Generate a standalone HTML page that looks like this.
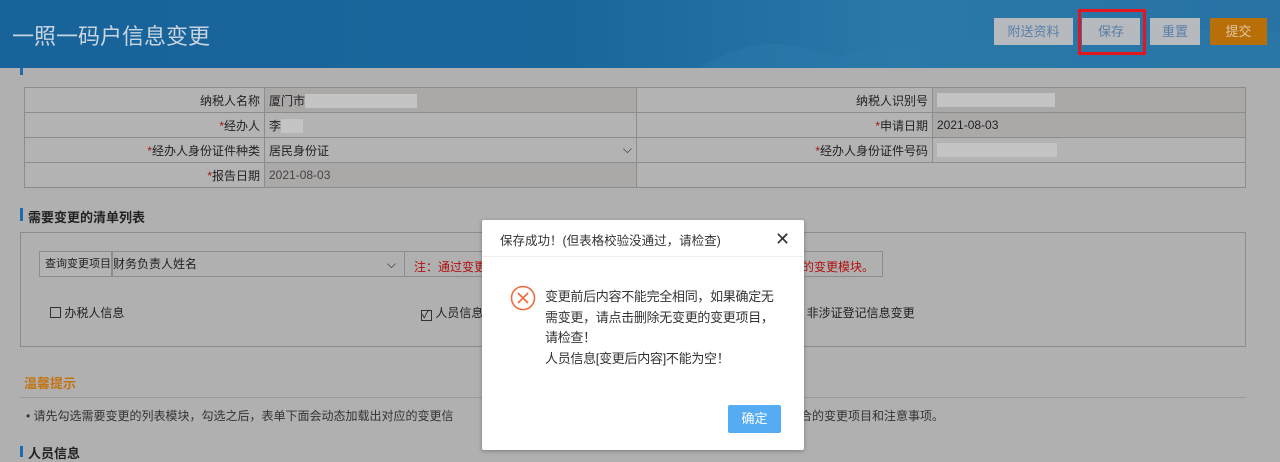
<!DOCTYPE html>
<html><head><meta charset="utf-8"><style>
*{margin:0;padding:0;box-sizing:border-box}
body{width:1280px;height:457px;overflow:hidden;background:#b0b0b0;font-family:"Liberation Sans","Noto Sans CJK SC",sans-serif;font-size:12px;color:#222;position:relative}
.a{position:absolute}
.hdr{left:0;top:0;width:1280px;height:68px;background:linear-gradient(90deg,#18639a 0%,#1a679c 45%,#2a78a8 70%,#2872a4 100%);overflow:hidden}
.btn{top:18px;height:27px;background:#b6b9bd;color:#5a7fa8;font-size:13px;text-align:center;line-height:27px}
table{border-collapse:collapse;position:absolute;left:24px;top:87px;width:1222px}
td{border:1px solid #8c8c8c;height:25px;padding:0 4px;font-size:12px}
td.l{text-align:right;background:#b3b3b3}
td.v{background:#aba8a8}
td.w{background:#b3b3b3}
.r{color:#a01818}
.blank{display:inline-block;background:#c4c4c4;height:14px;vertical-align:middle}
</style></head><body>
<div class="a hdr">
<svg class="a" style="left:0;top:0" width="1280" height="68"><path d="M700 68 Q740 42 780 44 Q810 48 840 56 Q870 44 900 48 Q960 34 1000 42 Q1050 34 1100 40 Q1160 26 1280 32 L1280 68Z" fill="#2a7aaa" opacity=".5"/></svg>
<div class="a" style="left:12px;top:19px;font-size:22px;color:#c8d5e0">一照一码户信息变更</div>
</div>
<div class="a btn" style="left:994px;width:79px">附送资料</div>
<div class="a btn" style="left:1082px;width:58px">保存</div>
<div class="a btn" style="left:1150px;width:50px">重置</div>
<div class="a btn" style="left:1210px;width:57px;background:#b86f08;color:#e0c8a8">提交</div>
<div class="a" style="left:1078px;top:9px;width:68px;height:46px;border:3px solid #e3161f"></div>
<div class="a" style="left:20px;top:68px;width:3px;height:7px;background:#1c6cb0"></div>
<table>
<tr><td class="l" style="width:240px">纳税人名称</td><td class="v" style="width:372px">厦门市<span class="blank" style="width:112px"></span></td><td class="l" style="width:296px">纳税人识别号</td><td class="v"><span class="blank" style="width:118px"></span></td></tr>
<tr><td class="l"><span class="r">*</span>经办人</td><td class="w">李<span class="blank" style="width:22px"></span></td><td class="l"><span class="r">*</span>申请日期</td><td class="v">2021-08-03</td></tr>
<tr><td class="l"><span class="r">*</span>经办人身份证件种类</td><td class="w">居民身份证<span style="float:right">&#x2335;</span></td><td class="l"><span class="r">*</span>经办人身份证件号码</td><td class="w"><span class="blank" style="width:120px"></span></td></tr>
<tr><td class="l"><span class="r">*</span>报告日期</td><td class="v" style="color:#444">2021-08-03</td><td class="w" colspan="2"></td></tr>
</table>
<div class="a" style="left:20px;top:208px;width:3px;height:13px;background:#1c6cb0"></div>
<div class="a" style="left:28px;top:207px;font-weight:bold;font-size:13px">需要变更的清单列表</div>
<div class="a" style="left:20px;top:232px;width:1226px;height:115px;border:1px solid #8c8c8c"></div>
<div class="a" style="left:39px;top:251px;width:844px;height:26px;border:1px solid #8c8c8c;background:#b0b0b0"></div>
<div class="a" style="left:39px;top:251px;width:73px;height:26px;border:1px solid #8c8c8c;background:#b3b3b3;line-height:24px;padding-left:5px;font-size:11px;white-space:nowrap;overflow:hidden">查询变更项目：</div>
<div class="a" style="left:112px;top:251px;width:293px;height:26px;border:1px solid #8c8c8c;line-height:24px;padding-left:0px">财务负责人姓名<span style="float:right;padding-right:8px">&#x2335;</span></div>
<div class="a r" style="left:414px;top:258px;color:#b01010">注：通过变更项</div>
<div class="a r" style="left:790px;top:258px;color:#b01010">应的变更模块。</div>
<div class="a" style="left:50px;top:304px"><span style="display:inline-block;width:11px;height:11px;border:1px solid #333;vertical-align:-1px"></span> 办税人信息</div>
<div class="a" style="left:421px;top:304px"><span style="display:inline-block;width:11px;height:11px;border:1px solid #333;vertical-align:-1px;font-size:11px;line-height:9px">✓</span> 人员信息</div>
<div class="a" style="left:800px;top:304px">] 非涉证登记信息变更</div>
<div class="a" style="left:24px;top:373px;color:#c27414;font-size:13px;font-weight:bold">温馨提示</div>
<div class="a" style="left:20px;top:397px;width:1226px;height:1px;background:#9a9a9a"></div>
<div class="a" style="left:26px;top:407px;color:#333">• 请先勾选需要变更的列表模块，勾选之后，表单下面会动态加载出对应的变更信</div>
<div class="a" style="left:800px;top:407px;color:#333">合的变更项目和注意事项。</div>
<div class="a" style="left:20px;top:446px;width:3px;height:11px;background:#1c6cb0"></div>
<div class="a" style="left:28px;top:443px;font-weight:bold;font-size:13px">人员信息</div>
<div class="a" style="left:482px;top:220px;width:322px;height:230px;background:#fff;border-radius:2px;box-shadow:0 1px 4px rgba(0,0,0,.3)">
<div class="a" style="left:18px;top:10px;font-size:12.5px;color:#333;white-space:nowrap">保存成功！(但表格校验没通过，请检查)</div>
<div class="a" style="left:293px;top:9px;font-size:18px;color:#333;font-weight:300">✕</div>
<div class="a" style="left:0;top:36px;width:322px;height:1px;background:#eee"></div>
<svg class="a" style="left:28px;top:65px" width="26" height="26"><circle cx="13" cy="13" r="11.5" fill="none" stroke="#f06a3a" stroke-width="1.6"/><path d="M8 8L18 18M18 8L8 18" stroke="#f06a3a" stroke-width="1.6"/></svg>
<div class="a" style="left:63px;top:67px;font-size:13px;line-height:20.5px;color:#333;width:238px;letter-spacing:-0.3px">变更前后内容不能完全相同，如果确定无需变更，请点击删除无变更的变更项目，请检查！<br>人员信息[变更后内容]不能为空！</div>
<div class="a" style="left:246px;top:185px;width:53px;height:28px;background:#55acf2;color:#fff;font-size:13px;text-align:center;line-height:28px;border-radius:2px">确定</div>
</div>
</body></html>
